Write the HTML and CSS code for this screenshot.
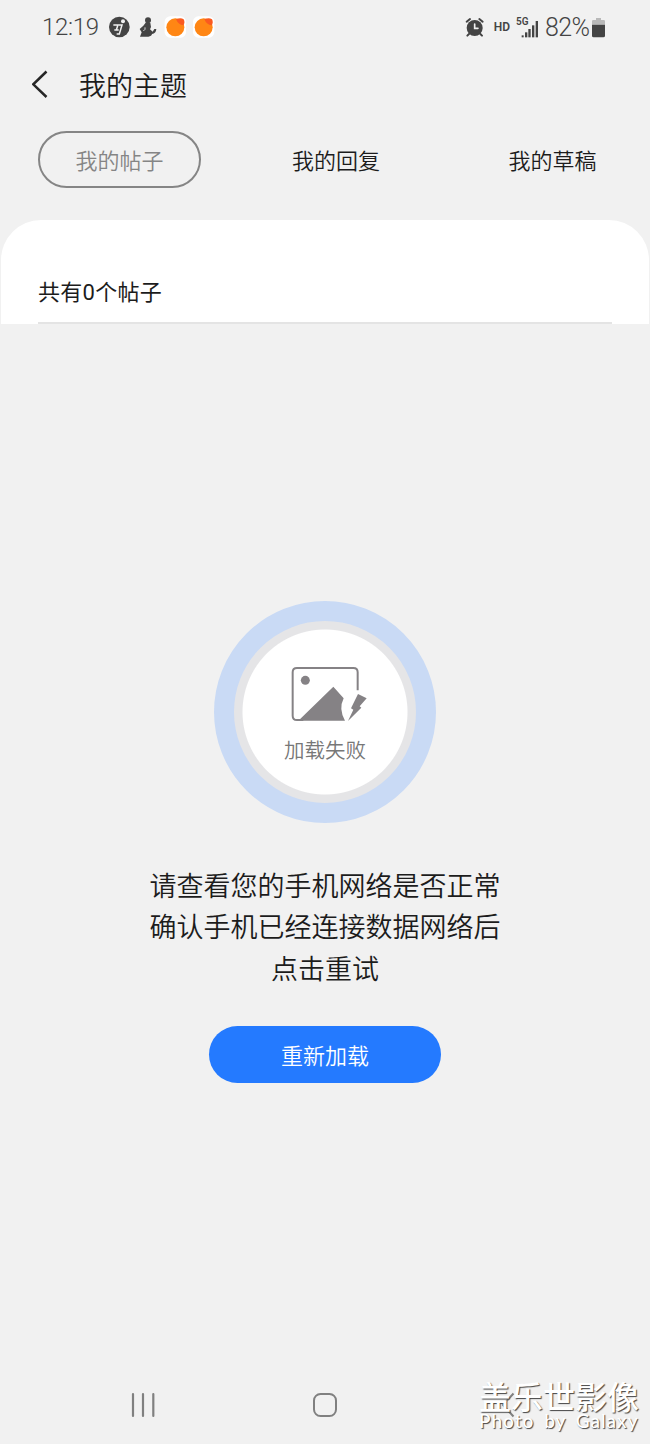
FILE: index.html
```html
<!DOCTYPE html>
<html lang="zh-CN">
<head>
<meta charset="utf-8">
<title>我的主题</title>
<link rel="stylesheet" href="styles.css">
</head>
<body>
<div class="screen">
  <div class="status">
    <div class="status-left">
      <span class="clock">12:19</span>
      <svg class="status-icon" width="120" height="45" viewBox="0 0 360 135">
        <circle cx="58" cy="66" r="31" fill="#444"/>
        <circle cx="69" cy="49" r="6" fill="#f1f1f1"/>
        <path d="M40 60H66L58 87H50M53 62L49 75M43 75H56" fill="none" stroke="#f1f1f1" stroke-width="4.500"/>
        <circle cx="144" cy="46" r="9" fill="#444"/>
        <path d="M138 52L151 54L153 66L150 73L158 80L163 72L169 72Q168 86 156 87Q155 94 145 95H120L125 82L119 72L130 62Z" fill="#444"/>
        <path d="M135 67L135 73L130 78" fill="none" stroke="#f1f1f1" stroke-width="2.500"/>
        <rect x="194" y="34" width="64" height="64" rx="16" fill="#fff"/>
        <circle cx="226" cy="67" r="27" fill="#ff8614"/>
        <path d="M228 43Q242 36 251 43Q256 53 250 61Q235 60 228 43Z" fill="#fa5a20"/>
        <rect x="279" y="34" width="64" height="64" rx="16" fill="#fff"/>
        <circle cx="311" cy="67" r="27" fill="#ff8614"/>
        <path d="M313 43Q327 36 336 43Q341 53 335 61Q320 60 313 43Z" fill="#fa5a20"/>
      </svg>
    </div>
    <div class="status-right">
      <svg class="alarm" width="22" height="22" viewBox="0 0 66 66" fill="none" stroke="#444" stroke-linecap="round">
        <circle cx="32" cy="36" r="24" fill="#444" stroke="none"/>
        <path d="M8 17L18 9M56 17L46 9M15 54L10 59M49 54L54 59" stroke-width="6"/>
        <path d="M32 24V37H42" stroke="#f1f1f1" stroke-width="5"/>
      </svg>
      <span class="hd">HD</span>
      <span class="signal">
        <span class="net">5G</span>
        <svg class="bars" width="18" height="18" viewBox="0 0 54 54" fill="#444">
          <rect x="2" y="46" width="6" height="6"/><rect x="12" y="37" width="7" height="15"/><rect x="22" y="27" width="7" height="25"/><rect x="33" y="16" width="7" height="36"/><rect x="44" y="3" width="7" height="49"/>
        </svg>
      </span>
      <span class="percent">82%</span>
      <svg class="battery" width="13" height="20" viewBox="0 0 39 60"><path d="M0 20V9Q0 6 4 6H12V0H27V6H35Q39 6 39 9V20Z" fill="#b9b9b9"/><path d="M0 20H39V53Q39 58 34 58H5Q0 58 0 53Z" fill="#444"/></svg>
    </div>
  </div>
  <header class="header">
    <svg width="16" height="30" viewBox="0 0 16 30"><path d="M14.500 1.500L1.300 14.300L14.500 27" fill="none" stroke="#262626" stroke-width="2.500"/></svg>
    <h1 class="title">我的主题</h1>
  </header>
  <nav class="tabs">
    <a class="tab tab-active">我的帖子</a>
    <a class="tab">我的回复</a>
    <a class="tab">我的草稿</a>
  </nav>
  <section class="panel"><div class="count">共有0个帖子</div></section>
  <main class="error">
    <div class="badge">
      <svg class="picture" width="95" height="75" viewBox="0 0 285 225">
        <path d="M233 106V52Q233 39 220 39H51Q38 39 38 52V182Q38 195 51 195H70" fill="none" stroke="#858285" stroke-width="6"/>
        <circle cx="76" cy="76" r="13.500" fill="#858285"/>
        <path d="M55 197L160 95L191 130Q175 162 195 197Z" fill="#858285"/>
        <path d="M234 117L260 130L239 154L244 158L204 198L220 164L213 160Z" fill="#858285"/>
      </svg>
      <span class="failed">加载失败</span>
    </div>
    <p class="message">请查看您的手机网络是否正常<br>确认手机已经连接数据网络后<br>点击重试</p>
    <button class="reload">重新加载</button>
  </main>
  <footer class="navbar">
    <svg width="26" height="28" viewBox="0 0 26 28"><path d="M3 3V25M13 3V25M23.300 3V25" stroke="#808080" stroke-width="2.200" stroke-linecap="round"/></svg>
    <svg width="26" height="28" viewBox="0 0 26 28"><rect x="2" y="3" width="22" height="22" rx="6.500" fill="none" stroke="#808080" stroke-width="2"/></svg>
    <svg width="26" height="28" viewBox="0 0 26 28"><path d="M19.500 2.500L9 14L19.500 25.500" fill="none" stroke="#808080" stroke-width="2"/></svg>
  </footer>
  <div class="watermark">
    <div class="mark-cn">盖乐世影像</div>
    <div class="mark-en">Photo by Galaxy</div>
  </div>
</div>
</body>
</html>
```
FILE: styles.css
```css
* { box-sizing: border-box; }
body {
  margin: 0;
  background: #f1f1f1;
  color: #1c1c1c;
  font-family: Roboto, "Noto Sans CJK SC", sans-serif;
  font-weight: 350;
}
svg { display: block; flex: none; }
.screen {
  position: relative;
  width: 650px;
  height: 1444px;
  display: flex;
  flex-direction: column;
  overflow: hidden;
}
.status {
  height: 54px;
  display: flex;
  justify-content: space-between;
  padding: 5px 45px 0 42px;
  color: #444;
}
.status-left, .status-right { display: flex; height: 45px; align-items: center; }
.clock { width: 58px; margin-top: -1px; font-size: 24px; letter-spacing: -0.3px; white-space: nowrap; }
.alarm { margin: -2px 1px 0 -1px; }
.hd { margin: -2px 0 0 7px; font-size: 12px; font-weight: 600; }
.signal { position: relative; margin-left: 6px; width: 24px; height: 22px; }
.net { position: absolute; left: 0; top: -1px; font-size: 10px; line-height: 11px; font-weight: 600; }
.bars { margin: 3px 0 0 5px; }
.percent { margin: -1px 0 0 5px; width: 44px; font-size: 25px; letter-spacing: -0.6px; }
.battery { margin: 0 0 0 3px; }
.header { height: 62px; display: flex; align-items: center; gap: 31px; padding-left: 32px; }
.title { margin: 0; padding-top: 3px; font-size: 27px; line-height: 40px; font-weight: 350; }
.tabs {
  height: 104px;
  padding: 15px 16px 0 38px;
  display: flex;
  justify-content: space-between;
}
.tab {
  width: 163px;
  height: 57px;
  padding-bottom: 2px;
  display: flex;
  align-items: center;
  justify-content: center;
  font-size: 22px;
  border: 2px solid transparent;
  border-radius: 29px;
}
.tab-active { color: #858585; border-color: #858585; }
.panel {
  height: 104px;
  margin: 0 1px;
  padding: 52px 37px 0;
  background: #fff;
  border-radius: 40px 40px 0 0;
}
.count { height: 52px; line-height: 42px; font-size: 22px; font-weight: 400; letter-spacing: 0.3px; border-bottom: 2px solid #e4e4e4; }
.error {
  flex: 1;
  display: flex;
  flex-direction: column;
  align-items: center;
  padding-top: 277px;
}
.badge {
  width: 222px;
  height: 222px;
  border: 20px solid #c9daf5;
  border-radius: 50%;
  background: radial-gradient(circle, #fff 82px, #e5e5e7 83px);
  display: flex;
  flex-direction: column;
  align-items: center;
}
.picture { margin: 34px 0 0 5px; }
.failed { margin-top: 6px; font-size: 20.5px; line-height: 30px; color: #777; }
.message { margin: 44px 0 0; font-size: 27px; line-height: 41.3px; text-align: center; }
.reload {
  margin-top: 35px;
  width: 232px;
  height: 57px;
  border: 0;
  border-radius: 29px;
  background: #247aff;
  color: #fff;
  font: 350 22px Roboto, "Noto Sans CJK SC", sans-serif;
}
.navbar {
  height: 78px;
  display: flex;
  justify-content: space-between;
  align-items: center;
  padding: 0 130px;
}
.watermark { position: absolute; left: 479px; top: 1382px; color: #fff; white-space: nowrap; text-shadow: 1px 1px 1px #444; }
.mark-cn { height: 30px; font-size: 32px; line-height: 32px; font-weight: 500; }
.mark-en { font-family: Lato, sans-serif; font-size: 19px; line-height: 17px; font-weight: 500; letter-spacing: 1px; word-spacing: 4px; }
```
